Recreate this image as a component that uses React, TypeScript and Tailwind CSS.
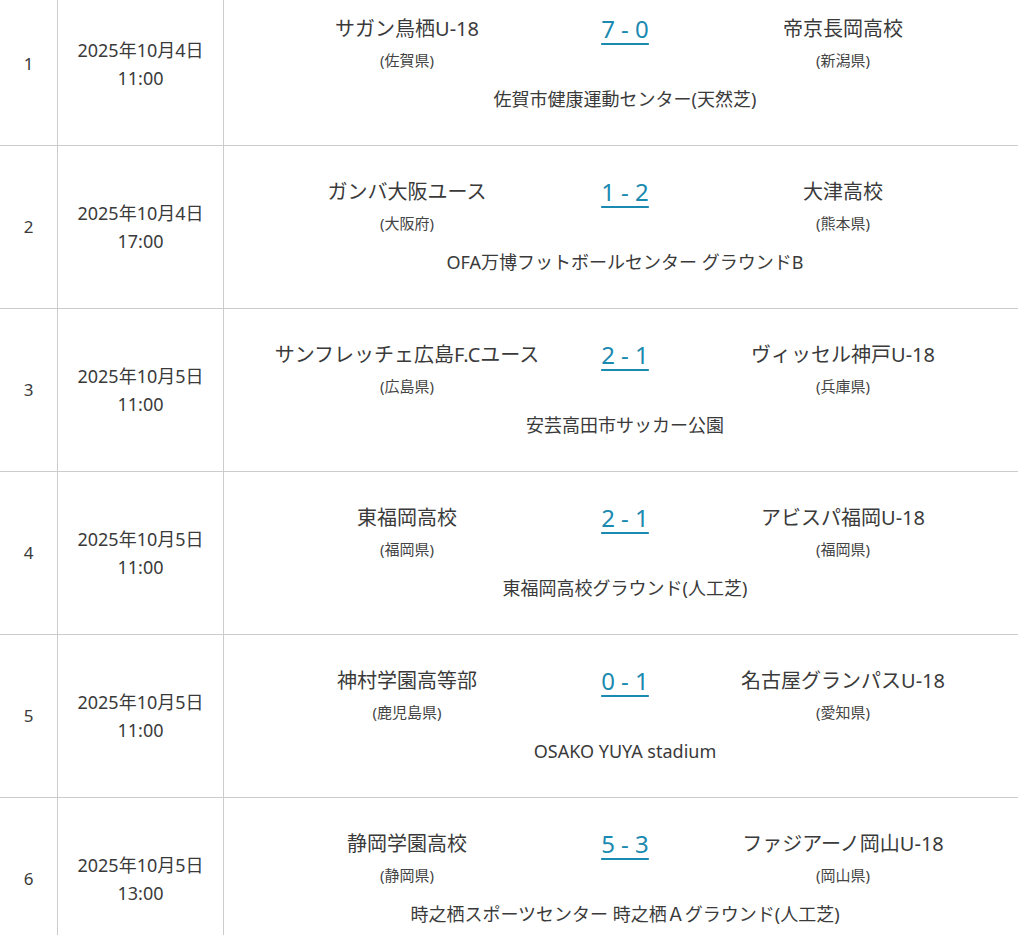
const matches = [
  {
    no: 1,
    date: "2025年10月4日",
    time: "11:00",
    home: "サガン鳥栖U-18",
    homePref: "(佐賀県)",
    score: "7 - 0",
    away: "帝京長岡高校",
    awayPref: "(新潟県)",
    venue: "佐賀市健康運動センター(天然芝)",
  },
  {
    no: 2,
    date: "2025年10月4日",
    time: "17:00",
    home: "ガンバ大阪ユース",
    homePref: "(大阪府)",
    score: "1 - 2",
    away: "大津高校",
    awayPref: "(熊本県)",
    venue: "OFA万博フットボールセンター グラウンドB",
  },
  {
    no: 3,
    date: "2025年10月5日",
    time: "11:00",
    home: "サンフレッチェ広島F.Cユース",
    homePref: "(広島県)",
    score: "2 - 1",
    away: "ヴィッセル神戸U-18",
    awayPref: "(兵庫県)",
    venue: "安芸高田市サッカー公園",
  },
  {
    no: 4,
    date: "2025年10月5日",
    time: "11:00",
    home: "東福岡高校",
    homePref: "(福岡県)",
    score: "2 - 1",
    away: "アビスパ福岡U-18",
    awayPref: "(福岡県)",
    venue: "東福岡高校グラウンド(人工芝)",
  },
  {
    no: 5,
    date: "2025年10月5日",
    time: "11:00",
    home: "神村学園高等部",
    homePref: "(鹿児島県)",
    score: "0 - 1",
    away: "名古屋グランパスU-18",
    awayPref: "(愛知県)",
    venue: "OSAKO YUYA stadium",
  },
  {
    no: 6,
    date: "2025年10月5日",
    time: "13:00",
    home: "静岡学園高校",
    homePref: "(静岡県)",
    score: "5 - 3",
    away: "ファジアーノ岡山U-18",
    awayPref: "(岡山県)",
    venue: "時之栖スポーツセンター 時之栖Ａグラウンド(人工芝)",
  },
];

type Match = (typeof matches)[number];

function Team({ name, pref }: { name: string; pref: string }) {
  return (
    <div className="flex flex-col items-center">
      <span className="whitespace-nowrap text-[20px] leading-[28px] text-[#3a3a3a]">
        {name}
      </span>
      <span className="mt-[6px] text-[15px] leading-[22px] text-[#444]">
        {pref}
      </span>
    </div>
  );
}

function Row({ m }: { m: Match }) {
  return (
    <div className="grid h-[163px] grid-cols-[58px_166px_802px] border-b border-[#cccccc]">
      <div className="flex items-center justify-center border-r border-[#cccccc] text-[17px] text-[#3a3a3a]">
        {m.no}
      </div>
      <div className="flex flex-col items-center justify-center border-r border-[#cccccc] text-[18px] leading-[28px] text-[#3a3a3a]">
        <span>{m.date}</span>
        <span>{m.time}</span>
      </div>
      <div className="flex flex-col justify-center pb-[3px]">
        <div className="grid grid-cols-[366px_70px_366px] items-start">
          <Team name={m.home} pref={m.homePref} />
          <a
            href="#"
            className="whitespace-nowrap text-center text-[24px] leading-[28px] text-[#1a8ab0] underline decoration-2 underline-offset-[5px]"
          >
            {m.score}
          </a>
          <Team name={m.away} pref={m.awayPref} />
        </div>
        <div className="mt-[16px] text-center text-[18px] leading-[24px] text-[#3a3a3a]">
          {m.venue}
        </div>
      </div>
    </div>
  );
}

export default function App() {
  return (
    <main
      className="h-[935px] w-[1018px] overflow-hidden bg-white"
      style={{ fontFamily: '"Noto Sans", "Noto Sans CJK JP", sans-serif' }}
    >
      <div className="-mt-[17px] w-[1026px]">
        {matches.map((m) => (
          <Row key={m.no} m={m} />
        ))}
      </div>
    </main>
  );
}
